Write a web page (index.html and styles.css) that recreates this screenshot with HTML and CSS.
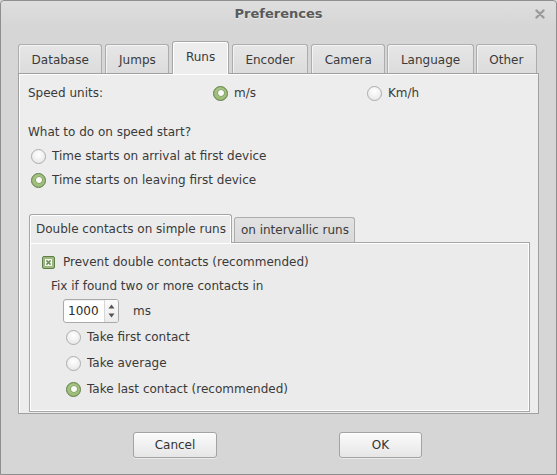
FILE: index.html
```html
<!DOCTYPE html>
<html>
<head>
<meta charset="utf-8">
<title>Preferences</title>
<link rel="stylesheet" href="styles.css">
</head>
<body>
<div class="window">
  <div class="titlebar">
    <span class="title">Preferences</span>
    <span class="close"><svg width="10" height="10" viewBox="0 0 10 10"><path d="M1.5 1.5 L8.5 8.5 M8.5 1.5 L1.5 8.5" stroke="#9b9b9b" stroke-width="2.4" stroke-linecap="round"/></svg></span>
  </div>
  <div class="notebook">
    <div class="tabs">
      <div class="tab">Database</div>
      <div class="tab">Jumps</div>
      <div class="tab active">Runs</div>
      <div class="tab">Encoder</div>
      <div class="tab">Camera</div>
      <div class="tab narrow-gap">Language</div>
      <div class="tab narrow-gap">Other</div>
    </div>
    <div class="page">
      <div class="units-row">
        <span class="label">Speed units:</span>
        <div class="radio-item"><span class="radio checked"></span><span>m/s</span></div>
        <div class="radio-item"><span class="radio"></span><span>Km/h</span></div>
      </div>
      <div class="question">What to do on speed start?</div>
      <div class="radio-item start-opt"><span class="radio"></span><span>Time starts on arrival at first device</span></div>
      <div class="radio-item start-opt"><span class="radio checked"></span><span>Time starts on leaving first device</span></div>

      <div class="subnotebook">
        <div class="subtabs">
          <div class="subtab active">Double contacts on simple runs</div>
          <div class="subtab">on intervallic runs</div>
        </div>
        <div class="subpage">
          <div class="check-row">
            <span class="checkbox"><svg width="13" height="13" viewBox="0 0 13 13"><rect x="0.5" y="0.5" width="12" height="12" rx="1.5" fill="#9dbc7c" stroke="#5f7e47"/><rect x="2.5" y="2.5" width="8" height="8" rx="1" fill="#f6f8f2" stroke="#86a26c" stroke-width="0.7"/><path d="M4.4 4.4 L8.6 8.6 M8.6 4.4 L4.4 8.6" stroke="#6f8f55" stroke-width="1.5"/></svg></span>
            <span>Prevent double contacts (recommended)</span>
          </div>
          <div class="fix-label">Fix if found two or more contacts in</div>
          <div class="spin-row">
            <div class="spinner">
              <span class="spin-value">1000</span>
              <span class="spin-arrows">
                <svg width="7" height="5" viewBox="0 0 7 5"><path d="M3.5 0.5 L6.5 4.5 L0.5 4.5 Z" fill="#555"/></svg>
                <svg width="7" height="5" viewBox="0 0 7 5"><path d="M0.5 0.5 L6.5 0.5 L3.5 4.5 Z" fill="#555"/></svg>
              </span>
            </div>
            <span class="unit">ms</span>
          </div>
          <div class="radio-item take-opt first"><span class="radio"></span><span>Take first contact</span></div>
          <div class="radio-item take-opt"><span class="radio"></span><span>Take average</span></div>
          <div class="radio-item take-opt"><span class="radio checked"></span><span>Take last contact (recommended)</span></div>
        </div>
      </div>
    </div>
  </div>
  <div class="buttons">
    <button class="btn">Cancel</button>
    <button class="btn">OK</button>
  </div>
</div>
</body>
</html>
```
FILE: styles.css
```css
* { box-sizing: border-box; }
html, body { margin: 0; padding: 0; }
body {
  font-family: "DejaVu Sans", "Liberation Sans", sans-serif;
  font-size: 12px;
  color: #3a3a3a;
  background: #d6d6d6;
}
.window {
  width: 557px;
  height: 475px;
  border: 1px solid #8e8e8e;
  border-radius: 4px 4px 0 0;
  background: #d6d6d6;
  display: flex;
  flex-direction: column;
}
.titlebar {
  position: relative;
  height: 25px;
  line-height: 25px;
  text-align: center;
  background: linear-gradient(#dedede, #d6d6d6);
  border-radius: 4px 4px 0 0;
}
.title {
  font-weight: bold;
  font-size: 13px;
  color: #5a5a5a;
  text-shadow: 0 1px 0 rgba(255,255,255,0.5);
}
.close {
  position: absolute;
  right: 11px;
  top: 8px;
  width: 10px;
  height: 10px;
  display: block;
  line-height: 0;
}
.notebook {
  margin: 15px 17px 0 17px;
  display: flex;
  flex-direction: column;
}
.tabs {
  display: flex;
  align-items: flex-end;
  gap: 3px;
  height: 32px;
}
.tab {
  height: 29px;
  padding: 0 12.6px;
  line-height: 30px;
  border: 1px solid #adadad;
  border-bottom: none;
  border-radius: 3px 3px 0 0;
  background: linear-gradient(#e6e6e6, #dcdcdc);
  box-shadow: inset 1px 1px 0 rgba(255,255,255,0.6);
  color: #3a3a3a;
  white-space: nowrap;
}
.tab.narrow-gap { margin-left: -1px; }
.tab.active {
  height: 33px;
  line-height: 30px;
  margin-bottom: -1px;
  background: #ededed;
  border-color: #a6a6a6;
  box-shadow: inset 1px 1px 0 #fff, inset -1px 0 0 #fff;
  position: relative;
  z-index: 1;
}
.page {
  height: 341px;
  border: 1px solid #a0a0a0;
  background: #ededed;
  box-shadow: inset 1px 1px 0 #fff;
  padding: 0 8px 1px 9px;
  display: flex;
  flex-direction: column;
}
.units-row {
  margin-top: 9px;
  height: 20px;
  display: grid;
  grid-template-columns: 185px 154px auto;
  align-items: center;
}
.label { line-height: 20px; }
.question {
  margin-top: 19px;
  height: 20px;
  line-height: 20px;
}
.radio-item {
  display: flex;
  align-items: center;
  gap: 6px;
  height: 20px;
  white-space: nowrap;
}
.start-opt { margin-top: 4px; margin-left: 3px; }
.radio {
  width: 15px;
  height: 15px;
  border-radius: 50%;
  border: 1px solid #acacac;
  background: radial-gradient(circle at 50% 35%, #ffffff, #eeeeee 60%, #e2e2e2);
  flex: none;
  position: relative;
}
.radio.checked {
  border-color: #5d7b44;
  background: radial-gradient(circle at 50% 40%, #b0cd8f, #93b46f);
}
.radio.checked::after {
  content: "";
  position: absolute;
  left: 3.5px;
  top: 3.5px;
  width: 6px;
  height: 6px;
  border-radius: 50%;
  background: #fbfbf8;
  box-shadow: 0 0 0 0.6px #6d8c53;
}
.subnotebook {
  margin-top: 24px;
  margin-left: 1px;
  flex: 1;
  display: flex;
  flex-direction: column;
}
.subtabs {
  display: flex;
  align-items: flex-end;
  gap: 2px;
  height: 28px;
}
.subtab {
  height: 25px;
  line-height: 25px;
  padding: 0 5px 0 6px;
  border: 1px solid #adadad;
  border-bottom: none;
  border-radius: 3px 3px 0 0;
  background: linear-gradient(#e2e2e2, #d9d9d9);
  white-space: nowrap;
}
.subtab.active {
  height: 29px;
  line-height: 28px;
  margin-bottom: -1px;
  background: #ebebeb;
  border-color: #a6a6a6;
  box-shadow: inset 1px 1px 0 #fff, inset -1px 0 0 #fff;
  position: relative;
  z-index: 1;
}
.subpage {
  flex: 1;
  border: 1px solid #a6a6a6;
  background: #ebebeb;
  box-shadow: inset 1px 1px 0 #fff, inset -1px -1px 0 #fff;
  padding: 0 0 0 12px;
  display: flex;
  flex-direction: column;
}
.check-row {
  margin-top: 9px;
  height: 20px;
  display: flex;
  align-items: center;
  gap: 8px;
  white-space: nowrap;
}
.checkbox { width: 13px; height: 13px; line-height: 0; flex: none; }
.fix-label {
  margin-top: 4px;
  margin-left: 9px;
  height: 20px;
  line-height: 20px;
}
.spin-row {
  margin-top: 3px;
  margin-left: 21px;
  height: 24px;
  display: flex;
  align-items: center;
  gap: 14px;
}
.spinner {
  width: 56px;
  height: 24px;
  border: 1px solid #a9a9a9;
  border-radius: 3px;
  background: #fff;
  display: flex;
  align-items: stretch;
  box-shadow: inset 0 1px 1px rgba(0,0,0,0.06);
}
.spin-value {
  flex: 1;
  padding-left: 4px;
  line-height: 22px;
  color: #2a2a2a;
}
.spin-arrows {
  width: 14px;
  border-left: 1px solid #d6d6d6;
  background: linear-gradient(#fafafa, #ececec);
  border-radius: 0 2px 2px 0;
  display: flex;
  flex-direction: column;
  align-items: center;
  justify-content: center;
  gap: 4px;
}
.spin-arrows svg { display: block; }
.unit { line-height: 20px; }
.take-opt { margin-top: 6px; margin-left: 24px; }
.take-opt.first { margin-top: 4px; }
.buttons {
  margin-top: 18px;
  padding-left: 132px;
  display: flex;
  gap: 122px;
}
.btn {
  height: 26px;
  width: 84px;
  font-family: "DejaVu Sans", "Liberation Sans", sans-serif;
  font-size: 12px;
  color: #333;
  border: 1px solid #a3a3a3;
  border-radius: 3px;
  background: linear-gradient(#fbfbfb, #e6e6e6);
  box-shadow: 0 1px 0 rgba(255,255,255,0.5), inset 0 1px 0 #fff;
  padding: 0;
}
.btn + .btn { width: 83px; }
```
